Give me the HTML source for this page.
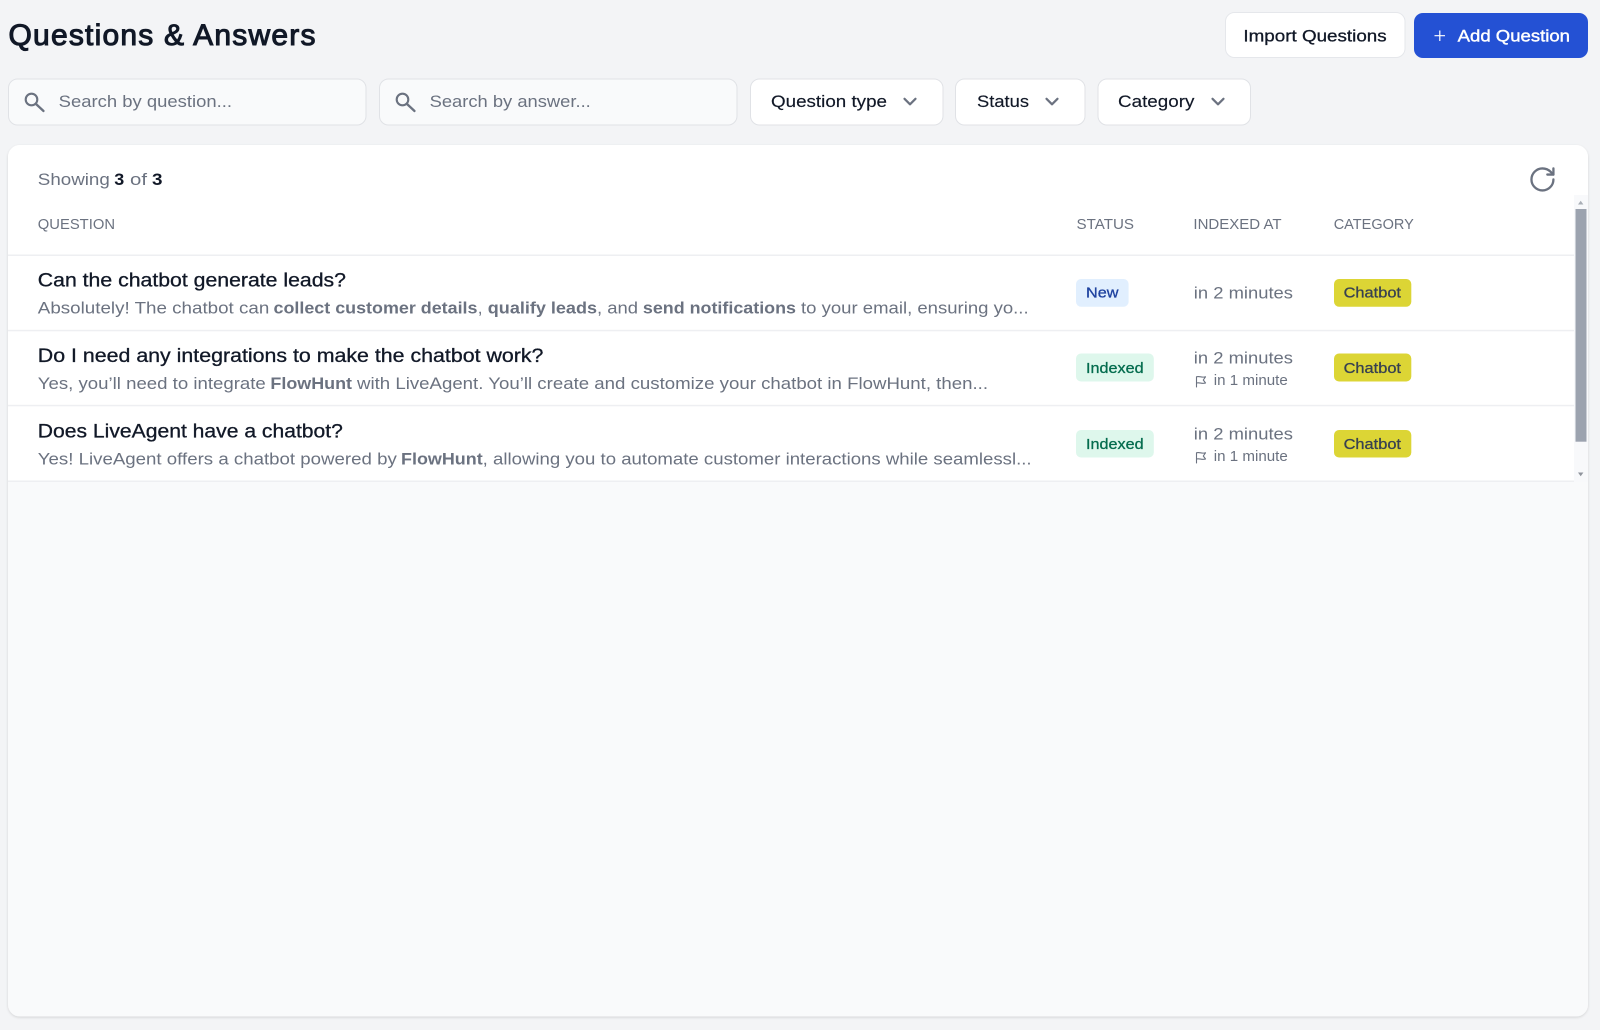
<!DOCTYPE html>
<html lang="en"><head><meta charset="utf-8"><title>Questions &amp; Answers</title>
<style>
html,body{margin:0;padding:0;width:1600px;height:1030px;overflow:hidden;background:#f3f4f6}
svg{display:block;filter:blur(.3px)}
text{font-family:"Liberation Sans",Arial,sans-serif;font-size:17px;fill:#6b7280}
.m{stroke:currentColor;stroke-width:.3px}
.b{font-weight:700}
.dark{fill:#111827;color:#111827}
.t{font-size:19px;fill:#111827;color:#111827}
.th{font-size:14.8px;fill:#6b7280}
.badge{font-size:15px}
.small{font-size:15px}
.ico{fill:none;stroke:#6b7280;stroke-linecap:round;stroke-linejoin:round}
</style></head><body>
<svg width="1600" height="1030" viewBox="0 0 1600 1030" xmlns="http://www.w3.org/2000/svg">
<defs><filter id="s" x="-2%" y="-2%" width="104%" height="104%"><feDropShadow dx="0" dy="1" stdDeviation="1.2" flood-color="#000" flood-opacity=".14"/></filter></defs>
<rect width="1600" height="1030" fill="#f3f4f6"/>

<text x="8.5" y="45" style="font-size:30px;fill:#111827;stroke:#111827;stroke-width:1.05px" textLength="307" lengthAdjust="spacing">Questions &amp; Answers</text>

<rect x="1225.5" y="12.5" width="179.5" height="45" rx="9" fill="#fff" stroke="#e5e7eb"/>
<text x="1243.4" y="41.5" class="m dark" textLength="143.3" lengthAdjust="spacingAndGlyphs">Import Questions</text>
<rect x="1414" y="13" width="174" height="45" rx="9" fill="#2451d4"/>
<path d="M1434.500 35.700h10.500M1439.800 30.500v10.500" stroke="#fff" stroke-width="1.200" fill="none"/>
<text x="1457.700" y="41.500" class="m" style="fill:#fff;color:#fff;stroke-width:.4px" textLength="112.300" lengthAdjust="spacingAndGlyphs">Add Question</text>

<rect x="8.500" y="79" width="357.500" height="46" rx="9" fill="#f9fafb" stroke="#e0e2e6"/>
<circle cx="31.500" cy="99.500" r="5.800" class="ico" stroke-width="2.100"/><path d="M36 104L43.500 111" class="ico" stroke-width="2.300"/>
<text x="58.700" y="107" textLength="173.300" lengthAdjust="spacingAndGlyphs">Search by question...</text>

<rect x="379.500" y="79" width="357.500" height="46" rx="9" fill="#f9fafb" stroke="#e0e2e6"/>
<circle cx="402.500" cy="99.500" r="5.800" class="ico" stroke-width="2.100"/><path d="M407 104L414.500 111" class="ico" stroke-width="2.300"/>
<text x="429.600" y="107" textLength="161.200" lengthAdjust="spacingAndGlyphs">Search by answer...</text>

<rect x="750.500" y="79" width="192.500" height="46" rx="9" fill="#fff" stroke="#e0e2e6"/>
<text x="771" y="107" class="dark" style="stroke:#111827;stroke-width:.15px" textLength="116" lengthAdjust="spacingAndGlyphs">Question type</text>
<path d="M904.500 98.800l5.500 5.500 5.500-5.500" class="ico" stroke-width="2.200"/>

<rect x="955.500" y="79" width="129.500" height="46" rx="9" fill="#fff" stroke="#e0e2e6"/>
<text x="977" y="107" class="dark" style="stroke:#111827;stroke-width:.15px" textLength="52" lengthAdjust="spacingAndGlyphs">Status</text>
<path d="M1046.500 98.800l5.500 5.500 5.500-5.500" class="ico" stroke-width="2.200"/>

<rect x="1098" y="79" width="152.500" height="46" rx="9" fill="#fff" stroke="#e0e2e6"/>
<text x="1118" y="107" class="dark" style="stroke:#111827;stroke-width:.15px" textLength="76.400" lengthAdjust="spacingAndGlyphs">Category</text>
<path d="M1212.500 98.800l5.500 5.500 5.500-5.500" class="ico" stroke-width="2.200"/>

<rect x="8" y="145" width="1580" height="871.500" rx="12" fill="#f9fafb" filter="url(#s)"/>
<path d="M8 481.500V157a12 12 0 0 1 12-12h1556a12 12 0 0 1 12 12v324.500z" fill="#fff"/>

<text x="37.800" y="185" textLength="72" lengthAdjust="spacingAndGlyphs">Showing</text>
<text x="114.300" y="185" class="b" style="fill:#111827" textLength="10" lengthAdjust="spacingAndGlyphs">3</text>
<text x="130" y="185" textLength="17" lengthAdjust="spacingAndGlyphs">of</text>
<text x="152" y="185" class="b" style="fill:#111827" textLength="10.500" lengthAdjust="spacingAndGlyphs">3</text>

<g transform="translate(1527.800 164.800) scale(1.220)" class="ico" stroke-width="1.900"><path d="M21 12a9 9 0 1 1-9-9c2.520 0 4.930 1 6.740 2.740L21 8"/><path d="M21 3v5h-5"/></g>

<text x="37.800" y="229" class="th" textLength="77.200" lengthAdjust="spacingAndGlyphs">QUESTION</text>
<text x="1076.500" y="229" class="th" textLength="57.500" lengthAdjust="spacingAndGlyphs">STATUS</text>
<text x="1193.400" y="229" class="th" textLength="88.200" lengthAdjust="spacingAndGlyphs">INDEXED AT</text>
<text x="1333.700" y="229" class="th" textLength="80.100" lengthAdjust="spacingAndGlyphs">CATEGORY</text>

<g fill="#eeeff2"><rect x="8" y="254.500" width="1567" height="1.500"/><rect x="8" y="329.800" width="1567" height="1.500"/><rect x="8" y="404.800" width="1567" height="1.500"/><rect x="8" y="480.500" width="1567" height="1.500"/></g>

<rect x="1574" y="195" width="14" height="287" fill="#f8f9fb"/>
<rect x="1575.500" y="209" width="11" height="232.700" fill="#9ca3af"/>
<path d="M1578 204.500l2.700-3.800 2.700 3.800z" fill="#a9aeb6"/>
<path d="M1578 472.500l2.700 3.800 2.700-3.800z" fill="#8f949c"/>

<!-- row 1 -->
<text x="37.800" y="286.700" class="t m" textLength="308.200" lengthAdjust="spacingAndGlyphs">Can the chatbot generate leads?</text>
<text x="37.800" y="313.300" textLength="231.500" lengthAdjust="spacingAndGlyphs">Absolutely! The chatbot can</text>
<text x="273.500" y="313.300" class="b" textLength="204" lengthAdjust="spacingAndGlyphs">collect customer details</text>
<text x="477.700" y="313.300">,</text>
<text x="487.800" y="313.300" class="b" textLength="109.200" lengthAdjust="spacingAndGlyphs">qualify leads</text>
<text x="597" y="313.300" textLength="41" lengthAdjust="spacingAndGlyphs">, and</text>
<text x="642.900" y="313.300" class="b" textLength="153.100" lengthAdjust="spacingAndGlyphs">send notifications</text>
<text x="801" y="313.300" textLength="227.600" lengthAdjust="spacingAndGlyphs">to your email, ensuring yo...</text>

<rect x="1076" y="279" width="52.600" height="27.700" rx="5" fill="#e1effe"/>
<text x="1086" y="297.400" class="badge m" style="fill:#1e429f;color:#1e429f" textLength="32.500" lengthAdjust="spacingAndGlyphs">New</text>
<text x="1193.800" y="298.500" textLength="99.200" lengthAdjust="spacingAndGlyphs">in 2 minutes</text>
<rect x="1334" y="279" width="77.300" height="27.700" rx="5" fill="#dcd535"/>
<text x="1343.600" y="297.400" class="badge m" style="fill:#374151;color:#374151" textLength="57.400" lengthAdjust="spacingAndGlyphs">Chatbot</text>

<!-- row 2 -->
<text x="37.800" y="362" class="t m" textLength="505.600" lengthAdjust="spacingAndGlyphs">Do I need any integrations to make the chatbot work?</text>
<text x="37.800" y="389" textLength="228" lengthAdjust="spacingAndGlyphs">Yes, you’ll need to integrate</text>
<text x="270.400" y="389" class="b" textLength="81.600" lengthAdjust="spacingAndGlyphs">FlowHunt</text>
<text x="357" y="389" textLength="631" lengthAdjust="spacingAndGlyphs">with LiveAgent. You’ll create and customize your chatbot in FlowHunt, then...</text>

<rect x="1076" y="353.500" width="77.800" height="28" rx="5" fill="#def7ec"/>
<text x="1086" y="372.800" class="badge m" style="fill:#046c4e;color:#046c4e" textLength="57.600" lengthAdjust="spacingAndGlyphs">Indexed</text>
<text x="1193.800" y="363.500" textLength="99.200" lengthAdjust="spacingAndGlyphs">in 2 minutes</text>
<path d="M1196.500 387V376.800c3-1 5.500 1.200 9 0l-2.200 3.200 2.200 3c-3.500 1.200-6-1-9 0" class="ico" stroke-width="1.100"/>
<text x="1213.800" y="385" class="small" textLength="74" lengthAdjust="spacingAndGlyphs">in 1 minute</text>
<rect x="1334" y="353.500" width="77.300" height="28" rx="5" fill="#dcd535"/>
<text x="1343.600" y="372.800" class="badge m" style="fill:#374151;color:#374151" textLength="57.400" lengthAdjust="spacingAndGlyphs">Chatbot</text>

<!-- row 3 -->
<text x="37.800" y="437.300" class="t m" textLength="305.100" lengthAdjust="spacingAndGlyphs">Does LiveAgent have a chatbot?</text>
<text x="37.800" y="464.600" textLength="359" lengthAdjust="spacingAndGlyphs">Yes! LiveAgent offers a chatbot powered by</text>
<text x="401" y="464.600" class="b" textLength="81.700" lengthAdjust="spacingAndGlyphs">FlowHunt</text>
<text x="482.700" y="464.600" textLength="548.900" lengthAdjust="spacingAndGlyphs">, allowing you to automate customer interactions while seamlessl...</text>

<rect x="1076" y="430" width="77.800" height="27.500" rx="5" fill="#def7ec"/>
<text x="1086" y="448.800" class="badge m" style="fill:#046c4e;color:#046c4e" textLength="57.600" lengthAdjust="spacingAndGlyphs">Indexed</text>
<text x="1193.800" y="439.500" textLength="99.200" lengthAdjust="spacingAndGlyphs">in 2 minutes</text>
<path d="M1196.500 463V452.800c3-1 5.500 1.200 9 0l-2.200 3.200 2.200 3c-3.500 1.200-6-1-9 0" class="ico" stroke-width="1.100"/>
<text x="1213.800" y="461" class="small" textLength="74" lengthAdjust="spacingAndGlyphs">in 1 minute</text>
<rect x="1334" y="430" width="77.300" height="27.500" rx="5" fill="#dcd535"/>
<text x="1343.600" y="448.800" class="badge m" style="fill:#374151;color:#374151" textLength="57.400" lengthAdjust="spacingAndGlyphs">Chatbot</text>
</svg>
</body></html>
